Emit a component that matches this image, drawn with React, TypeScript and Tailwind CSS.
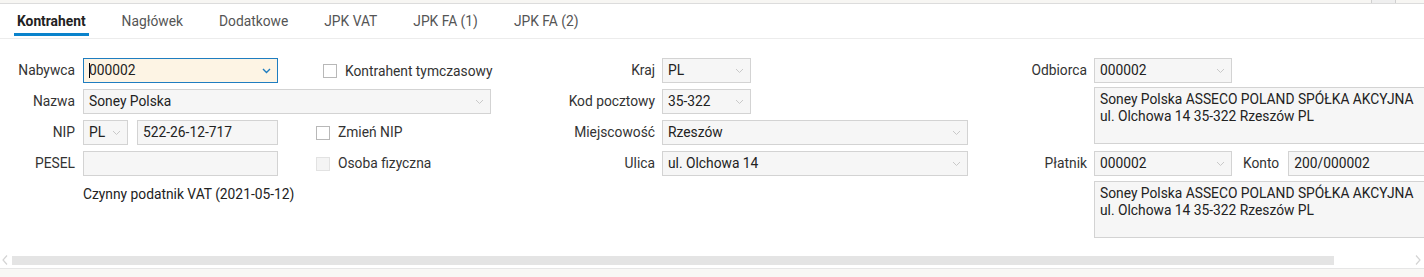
import React from "react";

const Chevron = ({ blue = false }: { blue?: boolean }) => (
  <svg width="9" height="6" viewBox="0 0 9 6" className="shrink-0">
    <polyline
      points="1,1 4.5,4.5 8,1"
      fill="none"
      stroke={blue ? "#1f7dc0" : "#c9c9c9"}
      strokeWidth={blue ? 1.4 : 1}
    />
  </svg>
);

const Select = ({
  value,
  w,
  focused = false,
  caret = false,
}: {
  value: string;
  w: string;
  focused?: boolean;
  caret?: boolean;
}) => (
  <div
    className={
      "h-[25px] flex items-center justify-between pl-[5px] pr-[6px] border shrink-0 " +
      w +
      (focused
        ? " border-[#1f7dc0] bg-[#fdf4e4]"
        : " border-[#d3d3d3] bg-[#f6f6f6]")
    }
  >
    <span className="flex items-center text-[#222]">
      {caret && <span className="w-[1px] h-[15px] bg-black mr-[-1px]" />}
      {value}
    </span>
    <Chevron blue={focused} />
  </div>
);

const Input = ({ value, w }: { value: string; w: string }) => (
  <div
    className={
      "h-[25px] flex items-center pl-[5px] border border-[#d3d3d3] bg-[#f6f6f6] text-[#222] shrink-0 " +
      w
    }
  >
    {value}
  </div>
);

const Check = ({ label, disabled = false, cls }: { label: string; disabled?: boolean; cls: string }) => (
  <div className={"flex items-center " + cls}>
    <div
      className={
        "w-[14px] h-[14px] border " +
        (disabled ? "border-[#e2e2e2] bg-[#f4f4f4]" : "border-[#b8b8b8] bg-white")
      }
    />
    <span className="ml-[8px] text-[#333]">{label}</span>
  </div>
);

const Label = ({ text, w }: { text: string; w: string }) => (
  <div className={"text-right text-[#333] shrink-0 " + w}>{text}</div>
);

const TextArea = ({ lines }: { lines: string[] }) => (
  <div className="w-[340px] h-[57px] border border-[#d3d3d3] bg-[#f6f6f6] pl-[5px] pt-[3px] text-[#222] leading-[17px] whitespace-nowrap">
    {lines.map((l) => (
      <div key={l}>{l}</div>
    ))}
  </div>
);

export default function App() {
  const tabs = ["Kontrahent", "Nagłówek", "Dodatkowe", "JPK VAT", "JPK FA (1)", "JPK FA (2)"];
  return (
    <div
      className="w-[1424px] h-[277px] overflow-hidden bg-white flex flex-col text-[13.8px]"
      style={{ fontFamily: "Roboto, 'Liberation Sans', sans-serif" }}
    >
      {/* top strip */}
      <div className="h-[4px] bg-[#f7f6f3] border-b border-[#dcdcdc] flex shrink-0">
        <div className="ml-auto mr-[28px] w-[25px] h-full bg-[#efefef] border-x border-[#d0d0d0]" />
      </div>

      {/* tabs */}
      <div className="h-[35px] border-b border-[#ececec] flex pl-[14px] gap-[30px] shrink-0">
        {tabs.map((t, i) => (
          <div
            key={t}
            className={
              "relative px-[3px] flex items-center " +
              (i === 0 ? "font-bold text-[#222]" : "text-[#555]")
            }
          >
            {t}
            {i === 0 && (
              <div className="absolute left-0 right-0 bottom-[2px] h-[3px] bg-[#0a83cc]" />
            )}
          </div>
        ))}
      </div>

      {/* form */}
      <div className="h-[213px] pt-[19px] flex shrink-0">
        {/* left */}
        <div className="w-[520px] flex flex-col gap-[6px] shrink-0">
          <div className="flex items-center h-[25px]">
            <Label text="Nabywca" w="w-[75px]" />
            <div className="ml-[8px]">
              <Select value="000002" w="w-[195px]" focused caret />
            </div>
            <Check label="Kontrahent tymczasowy" cls="ml-[45px] self-start mt-[3px]" />
          </div>
          <div className="flex items-center h-[25px]">
            <Label text="Nazwa" w="w-[75px]" />
            <div className="ml-[8px]">
              <Select value="Soney Polska" w="w-[408px]" />
            </div>
          </div>
          <div className="flex items-center h-[25px]">
            <Label text="NIP" w="w-[75px]" />
            <div className="ml-[8px]">
              <Select value="PL" w="w-[45px]" />
            </div>
            <div className="ml-[9px]">
              <Input value="522-26-12-717" w="w-[141px]" />
            </div>
            <Check label="Zmień NIP" cls="ml-[38px]" />
          </div>
          <div className="flex items-center h-[25px]">
            <Label text="PESEL" w="w-[75px]" />
            <div className="ml-[8px]">
              <Input value="" w="w-[195px]" />
            </div>
            <Check label="Osoba fizyczna" disabled cls="ml-[38px]" />
          </div>
          <div className="flex items-center h-[25px] pl-[83px] text-[#222]">
            Czynny podatnik VAT (2021-05-12)
          </div>
        </div>

        {/* middle */}
        <div className="w-[460px] flex flex-col gap-[6px] shrink-0">
          <div className="flex items-center h-[25px]">
            <Label text="Kraj" w="w-[135px]" />
            <div className="ml-[7px]">
              <Select value="PL" w="w-[89px]" />
            </div>
          </div>
          <div className="flex items-center h-[25px]">
            <Label text="Kod pocztowy" w="w-[135px]" />
            <div className="ml-[7px]">
              <Select value="35-322" w="w-[89px]" />
            </div>
          </div>
          <div className="flex items-center h-[25px]">
            <Label text="Miejscowość" w="w-[135px]" />
            <div className="ml-[7px]">
              <Select value="Rzeszów" w="w-[306px]" />
            </div>
          </div>
          <div className="flex items-center h-[25px]">
            <Label text="Ulica" w="w-[135px]" />
            <div className="ml-[7px]">
              <Select value="ul. Olchowa 14" w="w-[306px]" />
            </div>
          </div>
        </div>

        {/* right */}
        <div className="flex flex-col shrink-0">
          <div className="flex items-center h-[25px]">
            <Label text="Odbiorca" w="w-[107px]" />
            <div className="ml-[7px]">
              <Select value="000002" w="w-[138px]" />
            </div>
          </div>
          <div className="ml-[114px] mt-[4px]">
            <TextArea
              lines={["Soney Polska ASSECO POLAND SPÓŁKA AKCYJNA", "ul. Olchowa 14 35-322 Rzeszów PL"]}
            />
          </div>
          <div className="flex items-center h-[25px] mt-[7px]">
            <Label text="Płatnik" w="w-[107px]" />
            <div className="ml-[7px]">
              <Select value="000002" w="w-[138px]" />
            </div>
            <span className="ml-[11px] text-[#333]">Konto</span>
            <div className="ml-[9px]">
              <Input value="200/000002" w="w-[150px]" />
            </div>
          </div>
          <div className="ml-[114px] mt-[5px]">
            <TextArea
              lines={["Soney Polska ASSECO POLAND SPÓŁKA AKCYJNA", "ul. Olchowa 14 35-322 Rzeszów PL"]}
            />
          </div>
        </div>
      </div>

      {/* scrollbar */}
      <div className="h-[16px] flex items-center shrink-0">
        <svg width="6" height="10" viewBox="0 0 6 10" className="ml-[2px]">
          <polyline points="5,0.5 1,5 5,9.5" fill="none" stroke="#d4d4d4" strokeWidth="1.2" />
        </svg>
        <div className="ml-[4px] w-[1322px] h-[9px] bg-[#e4e4e4]" />
        <svg width="6" height="10" viewBox="0 0 6 10" className="ml-auto mr-[3px]">
          <polyline points="1,0.5 5,5 1,9.5" fill="none" stroke="#d4d4d4" strokeWidth="1.2" />
        </svg>
      </div>
      <div className="flex-1 border-t border-[#e6e6e6] bg-[#f8f7f5]" />
    </div>
  );
}
